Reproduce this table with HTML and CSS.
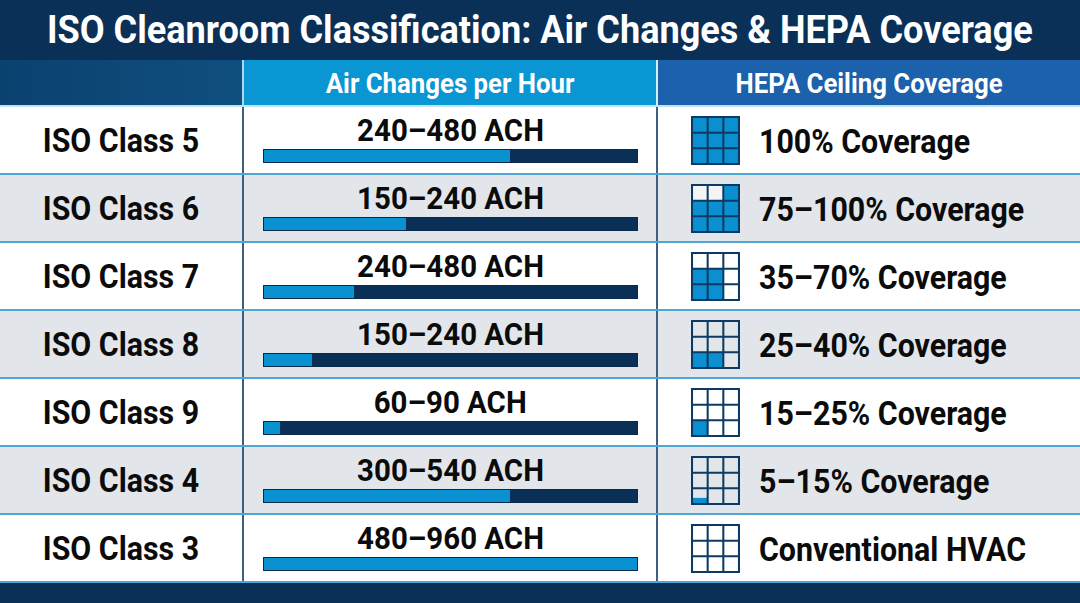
FILE: index.html
```html
<!DOCTYPE html>
<html>
<head>
<meta charset="utf-8">
<link rel="stylesheet" href="styles.css">
</head>
<body>
<div class="page">
  <header class="title"><span class="cond tcond">ISO Cleanroom Classification: Air Changes &amp; HEPA Coverage</span></header>
  <div class="table">
    <div class="head">
      <div class="h h1"></div>
      <div class="h h2"><span class="cond">Air Changes per Hour</span></div>
      <div class="h h3"><span class="cond">HEPA Ceiling Coverage</span></div>
    </div>

    <div class="row">
      <div class="c1"><span class="cond">ISO Class 5</span></div>
      <div class="c2"><div class="ach"><span class="cond">240–480 ACH</span></div><div class="bar"><div class="fill" style="width:66%"></div></div></div>
      <div class="c3">
        <svg class="grid" viewBox="0 0 48 48"><rect class="on" x="1" y="1" width="46" height="46"/><path class="lines" d="M1 1H47V47H1Z M16.33 1V47 M31.67 1V47 M1 16.33H47 M1 31.67H47"/></svg>
        <span class="cov cond">100% Coverage</span>
      </div>
    </div>

    <div class="row alt">
      <div class="c1"><span class="cond">ISO Class 6</span></div>
      <div class="c2"><div class="ach"><span class="cond">150–240 ACH</span></div><div class="bar"><div class="fill" style="width:38%"></div></div></div>
      <div class="c3">
        <svg class="grid" viewBox="0 0 48 48"><rect class="off" x="1" y="1" width="31" height="15.33"/><rect class="on" x="31.67" y="1" width="15.33" height="15.33"/><rect class="on" x="1" y="16.33" width="46" height="30.67"/><path class="lines" d="M1 1H47V47H1Z M16.33 1V47 M31.67 1V47 M1 16.33H47 M1 31.67H47"/></svg>
        <span class="cov cond">75–100% Coverage</span>
      </div>
    </div>

    <div class="row">
      <div class="c1"><span class="cond">ISO Class 7</span></div>
      <div class="c2"><div class="ach"><span class="cond">240–480 ACH</span></div><div class="bar"><div class="fill" style="width:24%"></div></div></div>
      <div class="c3">
        <svg class="grid" viewBox="0 0 48 48"><rect class="on" x="1" y="16.33" width="30.67" height="30.67"/><path class="lines" d="M1 1H47V47H1Z M16.33 1V47 M31.67 1V47 M1 16.33H47 M1 31.67H47"/></svg>
        <span class="cov cond">35–70% Coverage</span>
      </div>
    </div>

    <div class="row alt">
      <div class="c1"><span class="cond">ISO Class 8</span></div>
      <div class="c2"><div class="ach"><span class="cond">150–240 ACH</span></div><div class="bar"><div class="fill" style="width:13%"></div></div></div>
      <div class="c3">
        <svg class="grid" viewBox="0 0 48 48"><rect class="on" x="1" y="31.67" width="30.67" height="15.33"/><path class="lines" d="M1 1H47V47H1Z M16.33 1V47 M31.67 1V47 M1 16.33H47 M1 31.67H47"/></svg>
        <span class="cov cond">25–40% Coverage</span>
      </div>
    </div>

    <div class="row">
      <div class="c1"><span class="cond">ISO Class 9</span></div>
      <div class="c2"><div class="ach"><span class="cond">60–90 ACH</span></div><div class="bar"><div class="fill" style="width:4.3%"></div></div></div>
      <div class="c3">
        <svg class="grid" viewBox="0 0 48 48"><rect class="on" x="1" y="31.67" width="15.33" height="15.33"/><path class="lines" d="M1 1H47V47H1Z M16.33 1V47 M31.67 1V47 M1 16.33H47 M1 31.67H47"/></svg>
        <span class="cov cond">15–25% Coverage</span>
      </div>
    </div>

    <div class="row alt">
      <div class="c1"><span class="cond">ISO Class 4</span></div>
      <div class="c2"><div class="ach"><span class="cond">300–540 ACH</span></div><div class="bar"><div class="fill" style="width:66%"></div></div></div>
      <div class="c3">
        <svg class="grid" viewBox="0 0 48 48"><rect class="on" x="1" y="41" width="15.33" height="6"/><path class="lines" d="M1 1H47V47H1Z M16.33 1V47 M31.67 1V47 M1 16.33H47 M1 31.67H47"/></svg>
        <span class="cov cond">5–15% Coverage</span>
      </div>
    </div>

    <div class="row">
      <div class="c1"><span class="cond">ISO Class 3</span></div>
      <div class="c2"><div class="ach"><span class="cond">480–960 ACH</span></div><div class="bar"><div class="fill" style="width:100%"></div></div></div>
      <div class="c3">
        <svg class="grid" viewBox="0 0 48 48"><path class="lines" d="M1 1H47V47H1Z M16.33 1V47 M31.67 1V47 M1 16.33H47 M1 31.67H47"/></svg>
        <span class="cov cond">Conventional HVAC</span>
      </div>
    </div>
  </div>
  <footer class="foot"></footer>
</div>
</body>
</html>
```

FILE: styles.css
```css
* { box-sizing: border-box; }
html, body { margin: 0; padding: 0; }
body {
  width: 1080px;
  height: 603px;
  overflow: hidden;
  font-family: Roboto, "Liberation Sans", sans-serif;
  font-weight: 700;
  color: #0b0b0b;
  background: #ffffff;
}
.page { display: flex; flex-direction: column; height: 603px; }
.cond { display: inline-block; transform: scaleX(0.92); white-space: nowrap; }
.tcond { transform: scaleX(0.95); }

.title {
  height: 60px;
  background: #0a3057;
  color: #fff;
  font-size: 38px;
  line-height: 60px;
  text-align: center;
}

.table { display: flex; flex-direction: column; }
.head {
  display: grid;
  grid-template-columns: 244px 414px 1fr;
  height: 47px;
  border-bottom: 2px solid #bfe3f5;
}
.h {
  color: #fff;
  font-size: 28px;
  display: flex;
  align-items: center;
  justify-content: center;
  padding-top: 2px;
}
.h1 { background: linear-gradient(90deg, #0b416f, #0f4f80); border-right: 2px solid #a9d6f0; }
.h2 { background: #0a95d3; border-right: 2px solid #d6eefa; }
.h3 { background: #1b61ab; }

.row {
  display: grid;
  grid-template-columns: 244px 414px 1fr;
  height: 68px;
  border-bottom: 2px solid #4ea6d8;
  background: #ffffff;
}
.row.alt { background: #e2e6ea; }
.c1, .c2 { border-right: 2px solid #3d5f80; }
.c1 {
  display: flex;
  align-items: center;
  justify-content: center;
  font-size: 33px;
  padding-top: 1px;
}
.c2 {
  display: flex;
  flex-direction: column;
  align-items: stretch;
  padding: 4px 18px 0 19px;
}
.ach {
  text-align: center;
  font-size: 32px;
  line-height: 38px;
  height: 38px;
}
.bar {
  height: 14px;
  background: #0a3057;
  border: 1.5px solid #0a2a4c;
}
.fill { height: 100%; background: #0a91d2; }

.c3 {
  display: flex;
  align-items: center;
  padding-left: 33px;
  gap: 19px;
}
.grid { width: 49px; height: 49px; flex: none; }
.grid .on { fill: #0a8fd0; }
.grid .off { fill: #f2f4f6; }
.grid .lines { fill: none; stroke: #0d3a62; stroke-width: 2; }
.cov {
  font-size: 33px;
  transform-origin: left center;
  padding-top: 2px;
}
.foot { height: 20px; background: #0a3057; flex: none; }
```
